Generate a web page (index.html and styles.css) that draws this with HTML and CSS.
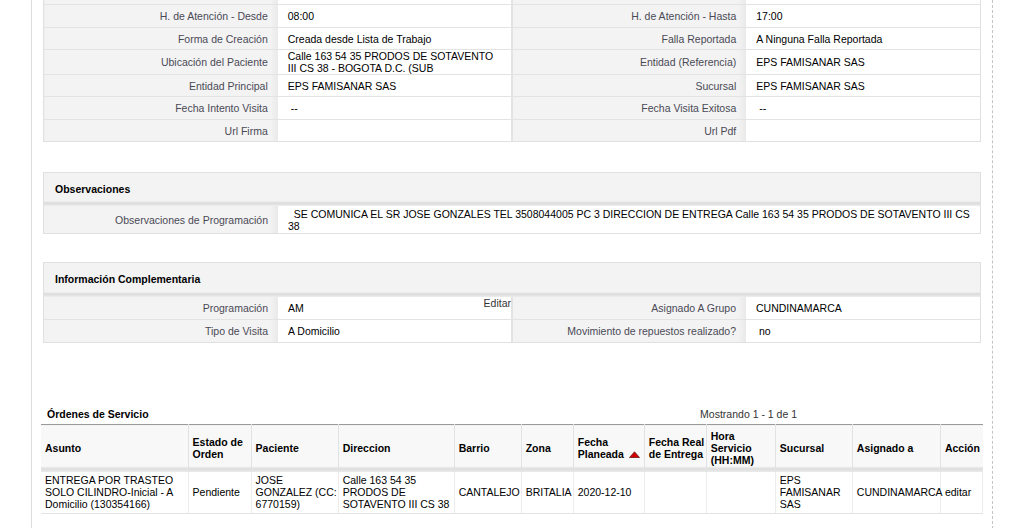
FILE: index.html
```html
<!DOCTYPE html>
<html lang="es">
<head>
<meta charset="utf-8">
<title>Detalle de Visita</title>
<link rel="stylesheet" href="styles.css">
</head>
<body>
<div class="page">
  <div class="block detail-top">
    <table class="detail bordered">
      <colgroup><col class="c25"><col class="c25"><col class="c25"><col class="c25"></colgroup>
      <tr class="r23"><td class="label">&nbsp;</td><td class="data"></td><td class="label sep">&nbsp;</td><td class="data"></td></tr>
      <tr class="r23"><td class="label">H. de Atención - Desde</td><td class="data">08:00</td><td class="label sep">H. de Atención - Hasta</td><td class="data">17:00</td></tr>
      <tr class="r22"><td class="label">Forma de Creación</td><td class="data">Creada desde Lista de Trabajo</td><td class="label sep">Falla Reportada</td><td class="data">A Ninguna Falla Reportada</td></tr>
      <tr class="r25"><td class="label">Ubicación del Paciente</td><td class="data">Calle 163 54 35 PRODOS DE SOTAVENTO III CS 38 - BOGOTA D.C. (SUB</td><td class="label sep">Entidad (Referencia)</td><td class="data">EPS FAMISANAR SAS</td></tr>
      <tr class="r22"><td class="label">Entidad Principal</td><td class="data">EPS FAMISANAR SAS</td><td class="label sep">Sucursal</td><td class="data">EPS FAMISANAR SAS</td></tr>
      <tr class="r23"><td class="label">Fecha Intento Visita</td><td class="data">&nbsp;--</td><td class="label sep">Fecha Visita Exitosa</td><td class="data">&nbsp;--</td></tr>
      <tr class="r22"><td class="label">Url Firma</td><td class="data"></td><td class="label sep">Url Pdf</td><td class="data"></td></tr>
    </table>
  </div>

  <div class="block pb obs">
    <div class="pb-head">Observaciones</div>
    <table class="detail">
      <colgroup><col class="c25"><col class="c75"></colgroup>
      <tr class="r27"><td class="label">Observaciones de Programación</td><td class="data">&nbsp; SE COMUNICA EL SR JOSE GONZALES TEL 3508044005 PC 3 DIRECCION DE ENTREGA Calle 163 54 35 PRODOS DE SOTAVENTO III CS 38</td></tr>
    </table>
  </div>

  <div class="block pb info">
    <div class="pb-head">Información Complementaria</div>
    <table class="detail">
      <colgroup><col class="c25"><col class="c25"><col class="c25"><col class="c25"></colgroup>
      <tr class="r22"><td class="label">Programación</td><td class="data data-edit"><div class="edit-wrap"><span>AM</span><a class="edit">Editar</a></div></td><td class="label sep">Asignado A Grupo</td><td class="data">CUNDINAMARCA</td></tr>
      <tr class="r23"><td class="label">Tipo de Visita</td><td class="data">A Domicilio</td><td class="label sep">Movimiento de repuestos realizado?</td><td class="data">&nbsp;no</td></tr>
    </table>
  </div>

  <div class="orders">
    <div class="orders-top">
      <span class="orders-title">Órdenes de Servicio</span>
      <span class="paging">Mostrando 1 - 1 de 1</span>
      <span></span>
    </div>
    <table class="list">
      <colgroup>
        <col class="w-asunto"><col class="w-estado"><col class="w-paciente"><col class="w-dir"><col class="w-barrio"><col class="w-zona"><col class="w-fecha"><col class="w-real"><col class="w-hora"><col class="w-suc"><col class="w-asig"><col class="w-acc">
      </colgroup>
      <thead>
        <tr>
          <th>Asunto</th>
          <th>Estado de Orden</th>
          <th>Paciente</th>
          <th>Direccion</th>
          <th>Barrio</th>
          <th>Zona</th>
          <th>Fecha Planeada <svg class="sort" width="11" height="7" viewBox="0 0 11 7"><path d="M0.5 6.5 L5.5 0.8 L10.5 6.5 Z" fill="#d40000" stroke="#6a1a1a" stroke-width="0.8"/></svg></th>
          <th>Fecha Real de Entrega</th>
          <th>Hora Servicio (HH:MM)</th>
          <th>Sucursal</th>
          <th>Asignado a</th>
          <th>Acción</th>
        </tr>
      </thead>
      <tbody>
        <tr class="body-row">
          <td>ENTREGA POR TRASTEO SOLO CILINDRO-Inicial - A Domicilio (130354166)</td>
          <td>Pendiente</td>
          <td>JOSE GONZALEZ (CC: 6770159)</td>
          <td>Calle 163 54 35 PRODOS DE SOTAVENTO III CS 38</td>
          <td>CANTALEJO</td>
          <td>BRITALIA</td>
          <td>2020-12-10</td>
          <td></td>
          <td></td>
          <td>EPS FAMISANAR SAS</td>
          <td>CUNDINAMARCA</td>
          <td>editar</td>
        </tr>
      </tbody>
    </table>
  </div>
</div>
</body>
</html>
```
FILE: styles.css
```css
* { box-sizing: border-box; }
html, body { margin: 0; height: 100%; }
body {
  font-family: "Liberation Sans", Arial, Helvetica, sans-serif;
  font-size: 10.5px;
  color: #000;
  background: #fff;
}
.page {
  margin-left: 31px;
  width: 962px;
  min-height: 100%;
  border-left: 1px solid #dcdcdc;
  border-right: 1px dashed #c4c4c4;
  padding-bottom: 20px;
  overflow: hidden;
}
.block { margin: 0 11px; }
.detail-top { margin-top: -19px; }

table.detail {
  width: 100%;
  border-collapse: collapse;
  table-layout: fixed;
}
table.bordered { border: 1px solid #e0e0e0; }
.c25 { width: 25%; }
.c75 { width: 75%; }
.detail td {
  border-bottom: 1px solid #e3e3e3;
  padding: 0 10px;
  line-height: 12px;
  vertical-align: middle;
}
.detail tr:last-child td { border-bottom: 0; }
.r22 { height: 22px; }
.r23 { height: 23px; }
.r25 { height: 25px; }
.r27 { height: 27px; }
.detail .label {
  text-align: right;
  color: #4a4a56;
  background: linear-gradient(to right, #f3f3f3 0, #f3f3f3 calc(100% - 8px), #e9e9e9 100%);
}
.detail .sep { border-left: 2px solid #e3e3e3; }
.detail .data { background: #fff; color: #000; }
.data-edit { padding-right: 0 !important; }
.edit-wrap { display: flex; justify-content: space-between; align-items: center; }
.edit { color: #333; margin-top: -9px; cursor: pointer; }

.pb { border: 1px solid #e0e0e0; }
.obs { margin-top: 30px; }
.info { margin-top: 28px; }
.pb-head {
  height: 33px;
  padding: 0 11px 2px;
  display: flex;
  align-items: center;
  font-weight: bold;
  background: linear-gradient(to bottom, #f3f3f3 0, #f3f3f3 calc(100% - 5px), #dadada calc(100% - 3px), #eeeeee 100%);
}
.info .pb-head { height: 34px; }

.orders { margin: 65px 9px 0; }
.orders-top {
  display: grid;
  grid-template-columns: 1fr auto 180px;
  align-items: end;
  padding: 0 6px 4px;
}
.orders-title { font-weight: bold; }
.paging { color: #333; }

table.list {
  width: 100%;
  border-collapse: collapse;
  table-layout: fixed;
  border-top: 1px solid #9a9a9a;
}
.w-asunto { width: 147px; }
.w-estado { width: 63px; }
.w-paciente { width: 87px; }
.w-dir { width: 116px; }
.w-barrio { width: 67px; }
.w-zona { width: 52px; }
.w-fecha { width: 71px; }
.w-real { width: 62px; }
.w-hora { width: 69px; }
.w-suc { width: 77px; }
.w-asig { width: 88px; }
.w-acc { width: 42px; }
.list th {
  text-align: left;
  font-weight: bold;
  line-height: 12px;
  padding: 5px 1px 6px 4px;
  vertical-align: middle;
  border-left: 1px solid #e0e3e5;
  background: linear-gradient(to bottom, #f8f8f8 0, #f8f8f8 calc(100% - 6px), #dcdcdc calc(100% - 4px), #ededed 100%);
}
.list th:first-child { border-left: 0; }
.sort { vertical-align: 0; margin-left: 2px; }
.body-row { height: 41px; }
.list td {
  line-height: 12.3px;
  padding: 0 0 0 4px;
  vertical-align: middle;
  border-left: 1px solid #ececec;
  border-bottom: 1px solid #e3e3e3;
}
.list td:first-child { border-left: 0; }
.list td:last-child { border-right: 1px solid #ececec; }
```
